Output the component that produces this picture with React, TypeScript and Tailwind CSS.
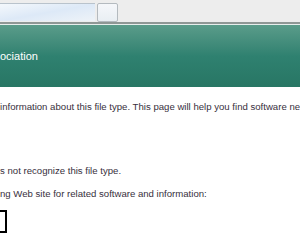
import React from 'react';

const App: React.FC = () => {
  return (
    <div className="w-[300px] h-[250px] overflow-hidden bg-white font-['Liberation_Sans',Arial,sans-serif]">
      {/* Browser toolbar strip */}
      <div className="h-[22px] bg-[#ededed] flex items-start pt-[3px]">
        <div className="w-[95px] h-[18px] border-t border-[#b9c3cc] bg-gradient-to-br from-[#f4f8fc] via-[#dde9f7] to-[#eef3f8]" />
        <div className="ml-[2px] w-[21px] h-[19px] border border-[#b4babf] rounded-[2px] bg-gradient-to-b from-[#f5f7fa] to-[#e9eef3]" />
      </div>
      <div className="h-[2px] bg-[#8f9795]" />
      <div className="h-[1px] bg-[#e6eeec]" />

      {/* Green header */}
      <div className="h-[62px] flex items-center bg-gradient-to-b from-[#5a9c8a] via-[#2f8170] to-[#287664]">
        <span className="text-[11px] leading-none text-white">ociation</span>
      </div>

      {/* Body */}
      <div className="pt-[14px] text-[9.6px] leading-[12px] text-[#38303d] whitespace-nowrap">
        <p>information about this file type. This page will help you find software ne</p>
        <p className="mt-[52px]">s not recognize this file type.</p>
        <p className="mt-[11px]">ng Web site for related software and information:</p>
        <div className="mt-[10px] w-[7px] h-[23px] border-y-2 border-r-2 border-black" />
      </div>
    </div>
  );
};

export default App;
